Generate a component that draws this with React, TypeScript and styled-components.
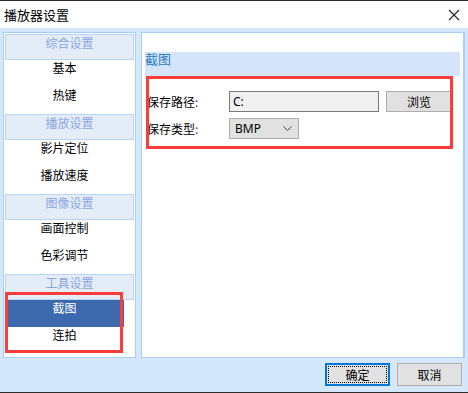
import React from "react";
import styled, { createGlobalStyle } from "styled-components";

const GlobalStyle = createGlobalStyle`
  html, body { margin: 0; padding: 0; background: #d5e7fb; }
  body { font-family: "Noto Sans CJK SC", "Noto Sans", sans-serif; font-size: 12px; color: #000; }
`;

const Window = styled.div`
  position: relative;
  width: 468px;
  height: 393px;
  box-sizing: border-box;
  border-top: 1px solid #2b2b2b;
  border-bottom: 1px solid #2b2b2b;
  background: #d5e7fb;
  display: flex;
  flex-direction: column;
  overflow: hidden;
`;

const TitleBar = styled.div`
  height: 27px;
  background: #fff;
  display: flex;
  align-items: center;
  justify-content: space-between;
  padding: 0 8px 0 4px;
`;

const Title = styled.span`
  font-size: 13px;
  line-height: 14px;
  margin-top: 1px;
`;

const CloseIcon = styled.svg`
  width: 12px;
  height: 12px;
  margin-top: 1px;
`;

const Body = styled.div`
  display: flex;
  gap: 5px;
  padding: 4px 3px 0 3px;
  height: 326px;
`;

const Sidebar = styled.div`
  width: 133px;
  box-sizing: border-box;
  border: 1px solid #a9cff5;
  padding: 1px;
  background: #fff;
  display: flex;
  flex-direction: column;
`;

const GroupHeader = styled.div`
  height: 26px;
  box-sizing: border-box;
  border: 1px solid #b7d6f5;
  background: #e4ecf7;
  color: #88a6e0;
  text-align: center;
  line-height: 14px;
  padding-top: 1px;
`;

const NavItem = styled.div<{ $active?: boolean }>`
  height: 27px;
  box-sizing: border-box;
  line-height: 14px;
  padding-top: 1px;
  text-align: center;
  margin-right: ${(p) => (p.$active ? "10px" : "0")};
  padding-right: ${(p) => (p.$active ? "0" : "10px")};
  background: ${(p) => (p.$active ? "#3c69ab" : "#fff")};
  color: ${(p) => (p.$active ? "#fff" : "#000")};
`;

const Content = styled.div`
  width: 324px;
  box-sizing: border-box;
  border: 1px solid #a9cff5;
  border-right: 2px solid #a9cff5;
  background: #fff;
  padding: 19px 3px 0 3px;
`;

const Band = styled.div`
  height: 24px;
  background: #d4e5fb;
  color: #2f7bbf;
  font-size: 13px;
  line-height: 13px;
`;

const Form = styled.div`
  display: flex;
  flex-direction: column;
  gap: 6px;
  padding: 15px 0 0 2px;
`;

const Row = styled.div`
  display: flex;
  align-items: center;
`;

const Label = styled.span`
  width: 82px;
`;

const Colon = styled.span`
  color: #7b2a7b;
`;

const TextInput = styled.div`
  width: 150px;
  height: 21px;
  box-sizing: border-box;
  border: 1px solid #7a7a7a;
  background: #f0f0f0;
  font-family: "Noto Sans", sans-serif;
  font-size: 12px;
  line-height: 19px;
  padding-left: 3px;
`;

const Button = styled.div<{ $focused?: boolean }>`
  height: ${(p) => (p.$focused ? "23px" : "21px")};
  width: ${(p) => (p.$focused ? "65px" : "66px")};
  box-sizing: border-box;
  border: ${(p) => (p.$focused ? "2px solid #0078d7" : "1px solid #adadad")};
  background: #e1e1e1;
  display: flex;
  align-items: center;
  justify-content: center;
  position: relative;
  &::after {
    content: "";
    display: ${(p) => (p.$focused ? "block" : "none")};
    position: absolute;
    inset: 1px;
    border: 1px dotted #000;
  }
`;

const BrowseButton = styled(Button)`
  margin-left: 7px;
`;

const FooterButton = styled(Button)`
  height: 23px;
  width: 65px;
`;

const Select = styled.div`
  width: 70px;
  height: 21px;
  box-sizing: border-box;
  border: 1px solid #adadad;
  background: #e1e1e1;
  display: flex;
  align-items: center;
  justify-content: space-between;
  padding: 0 6px 0 5px;
  font-family: "Noto Sans", sans-serif;
`;

const Footer = styled.div`
  display: flex;
  justify-content: flex-end;
  gap: 7px;
  padding: 5px 6px 0 0;
`;

const Annotation = styled.div<{ $x: number; $y: number; $w: number; $h: number }>`
  position: absolute;
  left: ${(p) => p.$x}px;
  top: ${(p) => p.$y}px;
  width: ${(p) => p.$w}px;
  height: ${(p) => p.$h}px;
  box-sizing: border-box;
  border: 3px solid #fc3b3b;
  pointer-events: none;
`;

const groups = [
  { title: "综合设置", items: ["基本", "热键"] },
  { title: "播放设置", items: ["影片定位", "播放速度"] },
  { title: "图像设置", items: ["画面控制", "色彩调节"] },
  { title: "工具设置", items: ["截图", "连拍"] },
];

export default function App() {
  const selected = "截图";
  return (
    <>
      <GlobalStyle />
      <Window>
        <TitleBar>
          <Title>播放器设置</Title>
          <CloseIcon viewBox="0 0 12 12">
            <path d="M1 1 L11 11 M11 1 L1 11" stroke="#222" strokeWidth="1.1" fill="none" />
          </CloseIcon>
        </TitleBar>
        <Body>
          <Sidebar>
            {groups.map((g) => (
              <React.Fragment key={g.title}>
                <GroupHeader>{g.title}</GroupHeader>
                {g.items.map((it) => (
                  <NavItem key={it} $active={it === selected}>
                    {it}
                  </NavItem>
                ))}
              </React.Fragment>
            ))}
          </Sidebar>
          <Content>
            <Band>截图</Band>
            <Form>
              <Row>
                <Label>
                  保存路径<Colon>:</Colon>
                </Label>
                <TextInput>C:</TextInput>
                <BrowseButton>浏览</BrowseButton>
              </Row>
              <Row>
                <Label>
                  保存类型<Colon>:</Colon>
                </Label>
                <Select>
                  <span>BMP</span>
                  <svg width="9" height="5" viewBox="0 0 9 5">
                    <path d="M0.5 0.5 L4.5 4.5 L8.5 0.5" stroke="#444" strokeWidth="1" fill="none" />
                  </svg>
                </Select>
              </Row>
            </Form>
          </Content>
        </Body>
        <Footer>
          <FooterButton $focused>确定</FooterButton>
          <FooterButton>取消</FooterButton>
        </Footer>
        <Annotation $x={146} $y={75} $w={307} $h={73} />
        <Annotation $x={5} $y={291} $w={118} $h={61} />
      </Window>
    </>
  );
}
